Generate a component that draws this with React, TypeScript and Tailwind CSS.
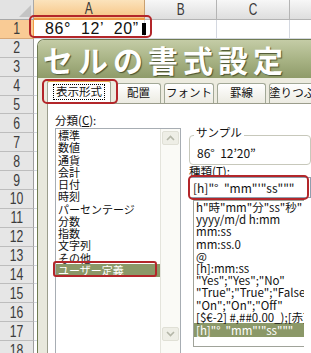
import React from 'react';

const rowNums = Array.from({ length: 18 }, (_, i) => i + 1);

const categories = [
  '標準', '数値', '通貨', '会計', '日付', '時刻', 'パーセンテージ',
  '分数', '指数', '文字列', 'その他', 'ユーザー定義',
];

const formats = [
  'h"時"mm"分"ss"秒"',
  'yyyy/m/d h:mm',
  'mm:ss',
  'mm:ss.0',
  '@',
  '[h]:mm:ss',
  '"Yes";"Yes";"No"',
  '"True";"True";"False"',
  '"On";"On";"Off"',
  '[$€-2] #,##0.00_);[赤](',
];

const FMT = '[h]"°  "mm"\'"ss"""';

const Chevron: React.FC<{ up?: boolean }> = ({ up }) => (
  <svg width="9" height="6" viewBox="0 0 9 6">
    <polyline
      points={up ? '1,5 4.5,1.5 8,5' : '1,1 4.5,4.5 8,1'}
      fill="none"
      stroke="#b4b6a8"
      strokeWidth="1.6"
    />
  </svg>
);

const Tab: React.FC<{ label: string; w: string; ml: string }> = ({ label, w, ml }) => (
  <div
    className={`${w} ${ml} h-[20px] pb-[2px] flex items-center justify-center rounded-t-[3px] border border-b-0 border-[#a2a897] bg-linear-to-b from-white to-[#ecebe2] text-[11.5px] text-[#111] leading-none whitespace-nowrap overflow-hidden`}
  >
    {label}
  </div>
);

export default function App() {
  return (
    <div
      className="relative w-[311px] h-[353px] overflow-hidden bg-white text-black"
      style={{ fontFamily: '"Noto Sans CJK JP", "Liberation Sans", sans-serif' }}
    >
      {/* column header row */}
      <div className="flex h-[20px]">
        <div className="relative w-[34px] shrink-0 bg-[#e3e3e3] border-r border-b border-[#a8a8a8]">
          <div className="absolute right-[2px] bottom-[2px] w-0 h-0 border-l-[12px] border-l-transparent border-b-[12px] border-b-[#c4c4c4]" />
        </div>
        <div className="w-[111px] shrink-0 flex items-center justify-center bg-linear-to-b from-[#fbe3bc] to-[#f6c483] border-r border-b-2 border-r-[#c9a070] border-b-[#ef9a45] text-[17px] text-[#3a3a3a]">
          <span className="inline-block scale-x-[0.7]" style={{ fontFamily: '"Liberation Sans", sans-serif' }}>A</span>
        </div>
        <div className="w-[72px] shrink-0 flex items-center justify-center bg-linear-to-b from-[#f7f7f7] to-[#dedede] border-r border-b border-[#b4b4b4] text-[17px] text-[#3a3a3a]">
          <span className="inline-block scale-x-[0.7]" style={{ fontFamily: '"Liberation Sans", sans-serif' }}>B</span>
        </div>
        <div className="w-[73px] shrink-0 flex items-center justify-center bg-linear-to-b from-[#f7f7f7] to-[#dedede] border-r border-b border-[#b4b4b4] text-[17px] text-[#3a3a3a]">
          <span className="inline-block scale-x-[0.7]" style={{ fontFamily: '"Liberation Sans", sans-serif' }}>C</span>
        </div>
        <div className="flex-1 bg-linear-to-b from-[#f7f7f7] to-[#dedede] border-b border-[#b4b4b4]" />
      </div>

      {/* rows */}
      {rowNums.map((n) => (
        <div key={n} className="flex h-[18.9px]">
          <div
            className={`w-[34px] shrink-0 flex items-center justify-center border-r border-b text-[17px] leading-none text-[#3c3c3c] ${
              n === 1 ? 'bg-[#f9cb95] border-r-[#ef9a45] border-b-[#d8a878]' : 'bg-[#e6e6e6] border-r-[#9e9e9e] border-b-[#bdbdbd]'
            }`}
          >
            <span className="inline-block scale-x-[0.72]" style={{ fontFamily: '"Liberation Sans", sans-serif' }}>{n}</span>
          </div>
          {n === 1 ? (
            <div className="w-[111px] shrink-0 flex items-center border-r border-b border-[#d4d8e0] pl-[11px]">
              <span className="whitespace-pre text-[16px] tracking-[0.6px] leading-none text-[#111]" style={{ fontFamily: '"Liberation Sans", sans-serif' }}>
                86°  12’  20”
              </span>
              <span className="ml-auto mr-[-2px] w-[4px] h-[12px] bg-black" />
            </div>
          ) : (
            <div className="w-[111px] shrink-0 border-r border-b border-[#d4d8e0]" />
          )}
          <div className="w-[72px] shrink-0 border-r border-b border-[#d4d8e0]" />
          <div className="w-[73px] shrink-0 border-r border-b border-[#d4d8e0]" />
          <div className="flex-1 border-b border-[#d4d8e0]" />
        </div>
      ))}

      {/* format cells dialog */}
      <div className="absolute left-[37px] top-[39px] w-[290px] h-[330px] flex flex-col rounded-tl-[7px] border-l border-t border-[#6f7b52] bg-[#e8e8dc] overflow-hidden">
        <div className="h-[38px] shrink-0 bg-linear-to-b from-[#c4cca6] via-[#a9b486] to-[#8f9b69] pl-[5px] flex items-center">
          <span className="text-[30px] font-bold text-white tracking-[5px] leading-none whitespace-nowrap [text-shadow:1px_1px_1px_#4a5330]">
            セルの書式設定
          </span>
        </div>

        <div className="h-[25px] shrink-0 flex items-end pl-[9px] bg-[#ecebdf]">
          <div className="w-[66px] h-[23px] pb-[1px] flex items-center justify-center rounded-t-[3px] border border-b-0 border-[#a2a897] border-t-2 border-t-[#e7a54a] bg-white">
            <span className="px-[2px] py-[1px] border border-dotted border-black text-[11.5px] leading-none text-[#111]">
              表示形式
            </span>
          </div>
          <Tab label="配置" w="w-[46px]" ml="ml-[5px]" />
          <Tab label="フォント" w="w-[52px]" ml="ml-[3px]" />
          <Tab label="罫線" w="w-[50px]" ml="ml-[3px]" />
          <Tab label="塗りつぶし" w="w-[60px]" ml="ml-[3px]" />
        </div>

        <div className="flex-1 ml-[9px] bg-white border-l border-t border-[#9b9d8c] flex pl-[7px] pt-[9px]">
          {/* category list */}
          <div className="w-[126px] shrink-0 flex flex-col">
            <div className="h-[15px] text-[11.5px] leading-[15px] text-[#111]">
              分類(<span className="underline">C</span>):
            </div>
            <div className="h-[226px] flex border border-[#a7adb3]">
              <div className="w-[104px] shrink-0 text-[11px] leading-[12.27px] text-[#111]">
                {categories.map((c, i) =>
                  i === categories.length - 1 ? (
                    <div key={c} className="h-[13px] leading-[13px] pl-[2px] bg-[#8b9868] text-white">
                      {c}
                    </div>
                  ) : (
                    <div key={c} className="h-[12.27px] pl-[2px] whitespace-nowrap">
                      {c}
                    </div>
                  )
                )}
              </div>
              <div className="flex-1 flex flex-col justify-between border-l border-[#e4e4dc] bg-[#fafaf6] py-[2px] px-[1px]">
                <div className="h-[14px] rounded-[2px] bg-[#eeeee6] border border-[#e0e0d6] flex items-center justify-center">
                  <Chevron up />
                </div>
                <div className="h-[14px] mb-[10px] rounded-[2px] bg-[#eeeee6] border border-[#e0e0d6] flex items-center justify-center">
                  <Chevron />
                </div>
              </div>
            </div>
          </div>

          {/* right side */}
          <div className="w-[122px] shrink-0 ml-[8px] flex flex-col">
            <div className="relative mt-[22px] h-[30px] shrink-0 rounded-[4px] border border-[#c7c8bb] pl-[7px] pt-[9px]">
              <span className="absolute -top-[11px] left-[4px] bg-white px-[2px] text-[11.5px] leading-[14px] text-[#111]">
                サンプル
              </span>
              <div className="whitespace-pre text-[12px] leading-[16px] text-[#111]">86°  12’20”</div>
            </div>
            <div className="h-[12px] shrink-0 text-[11.5px] leading-[12px] text-[#111]">
              種類(<span className="underline">T</span>):
            </div>
            <div className="h-[21px] shrink-0 border border-[#8f9fae] pl-[3px] text-[12px] leading-[19px] text-[#111] whitespace-pre overflow-hidden">
              {FMT}
            </div>
            <div className="ml-[4px] mt-[2px] w-[111px] h-[147px] shrink-0 border-l border-t border-b border-[#a0a39a] overflow-hidden text-[11.5px] leading-[12.2px] text-[#111]">
              {formats.map((f) => (
                <div key={f} className="h-[12.2px] pl-[2px] whitespace-pre">
                  {f}
                </div>
              ))}
              <div className="h-[14px] leading-[14px] pl-[2px] whitespace-pre bg-[#8b9868] text-white">{FMT}</div>
            </div>
          </div>
        </div>
      </div>

      {/* red annotation frames */}
      <div className="absolute left-[29px] top-[15px] w-[123px] h-[23px] rounded-[5px] border-2 border-[#b3262a]" />
      <div className="absolute left-[42px] top-[79px] w-[76px] h-[25px] rounded-[5px] border-2 border-[#b3262a]" />
      <div className="absolute left-[53px] top-[261px] w-[104px] h-[16px] rounded-[3px] border-2 border-[#b3262a]" />
      <div className="absolute left-[188px] top-[175px] w-[121px] h-[25px] rounded-[5px] border-2 border-[#b3262a]" />
    </div>
  );
}
